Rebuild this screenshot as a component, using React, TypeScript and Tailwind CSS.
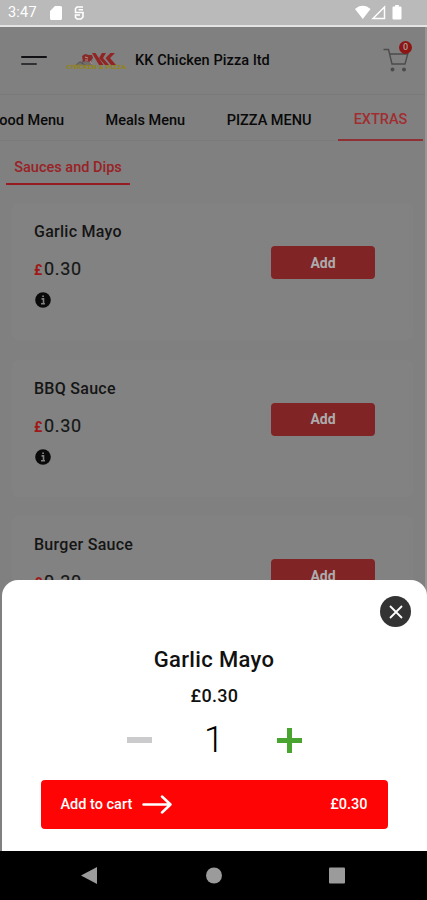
import React, { useState } from 'react';

const tabs = ['Food Menu', 'Meals Menu', 'PIZZA MENU'];

const sauces = [
  { name: 'Garlic Mayo', price: '0.30' },
  { name: 'BBQ Sauce', price: '0.30' },
  { name: 'Burger Sauce', price: '0.30' },
];

function StatusBar() {
  return (
    <div className="h-[27px] shrink-0 bg-[#bababa] border-b-2 border-[#e4e4e4] flex items-center justify-between pl-[8px] pr-[25px] text-white">
      <div className="flex items-center">
        <span className="w-[42px] pt-[2px] text-[14.5px] leading-none tracking-[0.2px]">3:47</span>
        <svg className="w-[12px] h-[14px]" viewBox="0 0 12 14" fill="currentColor">
          <path d="M5 0h5.5A1.5 1.5 0 0 1 12 1.5V12.5A1.5 1.5 0 0 1 10.5 14h-9A1.5 1.5 0 0 1 0 12.5V5z" />
        </svg>
        <svg className="w-[10px] h-[14px] ml-[12px]" viewBox="0 0 10 14" fill="none" stroke="currentColor" strokeWidth="1.6">
          <path d="M9 1H3L1.500 2.500V6.500H9V11L7 13H3L1.500 11.500V9H6M4.500 3.800H9" />
        </svg>
      </div>
      <svg className="w-[47px] h-[15px]" viewBox="0 0 47 15" fill="currentColor">
        <path d="M0 4C4.500-.5 11-.5 15.500 4L7.800 14z" />
        <path d="M29.500 2v11.500H18z" fill="none" stroke="currentColor" strokeWidth="1.5" />
        <path d="M38.500 1.500h1.700V0h3.600v1.500h1.700q1 0 1 1v11q0 1-1 1h-7q-1 0-1-1v-11q0-1 1-1z" />
      </svg>
    </div>
  );
}

function Logo() {
  return (
    <svg className="w-[62px] h-[18px]" viewBox="0 0 62 18">
      <path d="M9 13l5-4 4 1 2-5 3-1 3 4v5l-7 1z" fill="#716d6d" />
      <path d="M10 13l4-3 3 2M18 7l-2 4 3 2" stroke="#554f52" strokeWidth="0.8" fill="none" />
      <path d="M16 4l3-2 4 1 3 0 1 3-3 4-4-1-3 1z" fill="#872b2a" />
      <path d="M19 5l3 1M19 8h3M24 9l2 3" stroke="#b58d83" strokeWidth="1.1" />
      <path d="M26 1h3.500l8 12H33z" fill="#932424" />
      <path d="M40 1h-4l-3 5 6 7h4l-6-7z" fill="#932424" />
      <path d="M49 1h-4.500l-5 5 5.500 7h5l-6-7z" fill="#932424" />
      <path d="M1 14q9-2 22-.5" stroke="#91831f" strokeWidth="0.6" fill="none" />
      <text x="0.5" y="17.3" textLength="60" lengthAdjust="spacingAndGlyphs" fontFamily="Roboto, sans-serif" fontSize="5.4" fontWeight="900" fill="#91831f">
        CHICKEN &amp; PIZZA
      </text>
    </svg>
  );
}

function Header() {
  return (
    <header className="h-[68px] shrink-0 flex items-center pl-[21px] pr-[14px] border-b border-[#797979]">
      <div className="w-[26px] space-y-[5px]">
        <div className="h-[2px] bg-[#101015] rounded-full" />
        <div className="h-[2px] w-[16px] bg-[#303034] rounded-full" />
      </div>
      <div className="ml-[19px]">
        <Logo />
      </div>
      <h1 className="ml-[7px] pt-[1px] text-[14.5px] font-medium leading-none tracking-[0.08px] whitespace-nowrap text-[#090909]">
        KK Chicken Pizza ltd
      </h1>
      <div className="relative ml-auto w-[28px] h-[28px]">
        <svg className="w-[28px] h-[28px]" viewBox="0 0 28 28" fill="none" stroke="#4b4b4b" strokeWidth="1.4">
          <path d="M0.500 2.500h5L9 17h13l3-11M6.500 7H25" />
          <circle cx="9.500" cy="22.500" r="1.3" fill="#4b4b4b" />
          <circle cx="21" cy="22.500" r="1.3" fill="#4b4b4b" />
        </svg>
        <span className="absolute right-[-1px] top-[-6px] w-[13px] h-[13px] rounded-full bg-[#8d1514] text-[#a99] text-[9px] font-medium leading-[13px] text-center">
          0
        </span>
      </div>
    </header>
  );
}

function SauceCard({ name, price }: { name: string; price: string }) {
  return (
    <div className="h-[137px] shrink-0 mx-[12px] rounded-md bg-[#828282] flex justify-between pl-[22px] pr-[38px]">
      <div>
        <h3 className="mt-[19px] text-[16px] leading-[20px] font-medium tracking-[0.27px] text-[#151515]">{name}</h3>
        <div className="mt-[17px] h-[20px] flex items-baseline leading-[20px]">
          <span className="w-[10px] text-[14px] font-bold text-[#a01717]">£</span>
          <span className="text-[18px] tracking-[0.7px] text-[#161616] [-webkit-text-stroke:0.2px]">{price}</span>
        </div>
        <svg className="mt-[13px] w-[16px] h-[16px] ml-[0.5px]" viewBox="0 0 16 16">
          <circle cx="8" cy="8" r="7.8" fill="#0a0a0a" />
          <path d="M6.500 6.900h2v4.500M6 11.800h4M7.200 4.200h1.800" stroke="#808080" strokeWidth="1.6" fill="none" />
        </svg>
      </div>
      <button className="mt-[43px] w-[104px] h-[33px] rounded-[4px] bg-[#802426] text-[#acacac] text-[14px] font-bold leading-none">
        Add
      </button>
    </div>
  );
}

function AddSheet() {
  const [qty, setQty] = useState(1);

  return (
    <section className="absolute left-[2px] right-0 top-[580px] h-[271px] bg-white rounded-t-[16px] flex flex-col items-center">
      <button className="absolute left-[378px] top-[16px] w-[31px] h-[31px] rounded-full bg-[#333] flex items-center justify-center">
        <svg className="w-[14px] h-[14px]" viewBox="0 0 14 14" stroke="#fff" strokeWidth="1.8">
          <path d="M1 1l12 12M13 1L1 13" />
        </svg>
      </button>
      <h2 className="mt-[67px] text-[22px] leading-[26px] font-medium tracking-[0.35px] text-[#111] mr-[1px]">Garlic Mayo</h2>
      <p className="mt-[12px] text-[18px] leading-[22px] font-medium tracking-[0.3px] text-[#111]">£0.30</p>
      <div className="mt-[11px] w-[175px] h-[44px] flex items-center justify-between ml-[-1px]">
        <button onClick={() => setQty(Math.max(1, qty - 1))} className="w-[25px] h-[44px] flex items-center">
          <span className="block w-full h-[6px] bg-[#cbcbcd]" />
        </button>
        <span className="text-[36px] leading-[44px] font-light text-black">{qty}</span>
        <button onClick={() => setQty(qty + 1)}>
          <svg className="w-[25px] h-[25px]" viewBox="0 0 25 25" stroke="#49a52f" strokeWidth="5">
            <path d="M12.500 0v25M0 12.500h25" />
          </svg>
        </button>
      </div>
      <button className="mt-[18px] ml-[-1px] w-[347px] h-[49px] rounded-[4px] bg-[#ff0404] text-white flex items-center px-[20px] font-medium">
        <span className="text-[14.5px]">Add to cart</span>
        <svg className="ml-[10px] w-[30px] h-[19px]" viewBox="0 0 30 19" fill="none" stroke="currentColor" strokeWidth="2.5" strokeLinecap="round" strokeLinejoin="round">
          <path d="M1.500 9.500h27M20 1.500l8.500 8-8.500 8" />
        </svg>
        <span className="ml-auto text-[14.5px]">£0.30</span>
      </button>
    </section>
  );
}

export default function App() {
  return (
    <div className="relative w-full h-[900px] overflow-hidden flex flex-col bg-[#808080] font-['Roboto',sans-serif]">
      <StatusBar />
      <div className="h-[824px] shrink-0 overflow-hidden flex flex-col border-r-2 border-[#969696]">
        <Header />
        {/* category strip is scrolled to its end, first tab runs off the left side */}
        <nav className="h-[46px] shrink-0 flex justify-end gap-[41.5px] pr-[2px] border-b border-[#7b7b7b] text-[14.5px] leading-[20px] font-medium text-[#090909] whitespace-nowrap">
          {tabs.map((tab) => (
            <span key={tab} className="mt-[16px] shrink-0">
              {tab}
            </span>
          ))}
          <span className="ml-[-15px] w-[85px] h-[46px] shrink-0 pt-[15px] border-b-2 border-[#913034] text-center text-[#a12d31]">
            EXTRAS
          </span>
        </nav>
        <div className="h-[62px] shrink-0 pl-[6px]">
          <div className="w-[124px] h-[44px] pt-[17px] border-b-2 border-[#961b20] text-center text-[14.5px] leading-[20px] font-medium whitespace-nowrap text-[#992226]">
            Sauces and Dips
          </div>
        </div>
        <div className="flex flex-col gap-[19.5px]">
          {sauces.map((s) => (
            <SauceCard key={s.name} name={s.name} price={s.price} />
          ))}
        </div>
      </div>
      <footer className="h-[49px] bg-black">
        <svg className="w-full h-full" viewBox="0 0 427 49" fill="#9b9b9b">
          <path d="M81 24.500L97 16v17z" />
          <circle cx="214" cy="24.500" r="8" />
          <rect x="329" y="16.500" width="16" height="16" rx="1" />
        </svg>
      </footer>
      <AddSheet />
    </div>
  );
}
